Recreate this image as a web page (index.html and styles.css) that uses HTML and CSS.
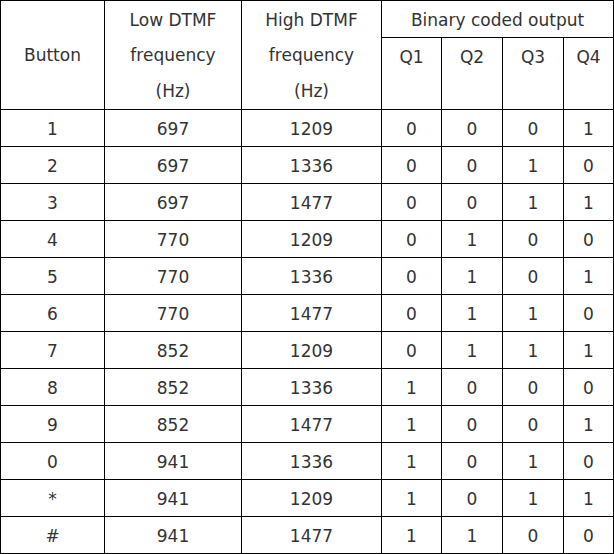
FILE: index.html
```html
<!DOCTYPE html>
<html>
<head>
<meta charset="utf-8">
<link rel="stylesheet" href="styles.css">
</head>
<body>
<table class="dtmf">
  <colgroup>
    <col class="c-btn"><col class="c-low"><col class="c-high"><col class="c-q1"><col class="c-q"><col class="c-q"><col class="c-q4">
  </colgroup>
  <thead>
    <tr>
      <th rowspan="2" class="multi">Button</th>
      <th rowspan="2" class="multi">Low DTMF<br>frequency<br>(Hz)</th>
      <th rowspan="2" class="multi">High DTMF<br>frequency<br>(Hz)</th>
      <th colspan="4">Binary coded output</th>
    </tr>
    <tr class="qrow">
      <th>Q1</th><th>Q2</th><th>Q3</th><th>Q4</th>
    </tr>
  </thead>
  <tbody>
    <tr><td>1</td><td>697</td><td>1209</td><td>0</td><td>0</td><td>0</td><td>1</td></tr>
    <tr><td>2</td><td>697</td><td>1336</td><td>0</td><td>0</td><td>1</td><td>0</td></tr>
    <tr><td>3</td><td>697</td><td>1477</td><td>0</td><td>0</td><td>1</td><td>1</td></tr>
    <tr><td>4</td><td>770</td><td>1209</td><td>0</td><td>1</td><td>0</td><td>0</td></tr>
    <tr><td>5</td><td>770</td><td>1336</td><td>0</td><td>1</td><td>0</td><td>1</td></tr>
    <tr><td>6</td><td>770</td><td>1477</td><td>0</td><td>1</td><td>1</td><td>0</td></tr>
    <tr><td>7</td><td>852</td><td>1209</td><td>0</td><td>1</td><td>1</td><td>1</td></tr>
    <tr><td>8</td><td>852</td><td>1336</td><td>1</td><td>0</td><td>0</td><td>0</td></tr>
    <tr><td>9</td><td>852</td><td>1477</td><td>1</td><td>0</td><td>0</td><td>1</td></tr>
    <tr><td>0</td><td>941</td><td>1336</td><td>1</td><td>0</td><td>1</td><td>0</td></tr>
    <tr><td>*</td><td>941</td><td>1209</td><td>1</td><td>0</td><td>1</td><td>1</td></tr>
    <tr><td>#</td><td>941</td><td>1477</td><td>1</td><td>1</td><td>0</td><td>0</td></tr>
  </tbody>
</table>
</body>
</html>
```
FILE: styles.css
```css
html, body {
  margin: 0;
  padding: 0;
  background: #fff;
}
.dtmf {
  border-collapse: collapse;
  table-layout: fixed;
  width: 613px;
  font-family: "DejaVu Sans", Verdana, sans-serif;
  font-size: 17px;
  color: #333;
}
.c-btn { width: 104px; }
.c-low { width: 137px; }
.c-high { width: 140px; }
.c-q1 { width: 60px; }
.c-q { width: 61px; }
.c-q4 { width: 50px; }
.dtmf th, .dtmf td {
  border: 1px solid #000;
  padding: 2px 0 0;
  line-height: 34px;
  text-align: center;
  vertical-align: middle;
  font-weight: normal;
}
.dtmf th.multi {
  line-height: 35.33px;
}
.dtmf .qrow th {
  vertical-align: top;
  height: 69px;
}
```
